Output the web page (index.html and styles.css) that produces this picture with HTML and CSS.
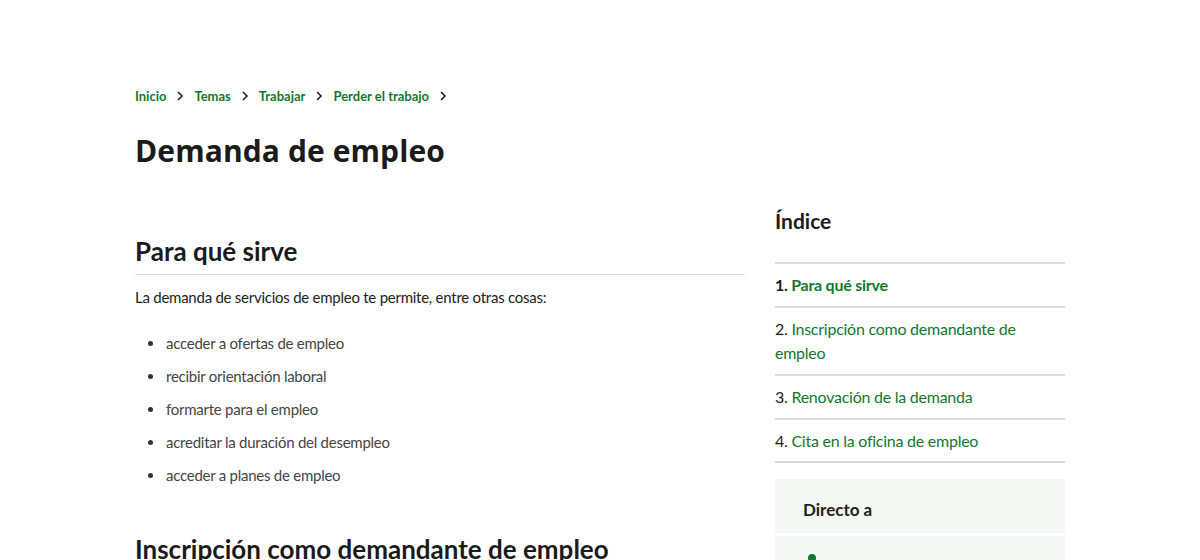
FILE: index.html
```html
<!DOCTYPE html>
<html lang="es">
<head>
<meta charset="utf-8">
<title>Demanda de empleo</title>
<link rel="stylesheet" href="styles.css">
</head>
<body>
<div class="page">
  <nav class="breadcrumb">
    <a href="#">Inicio</a>
    <svg class="chev" viewBox="0 0 8 12" width="8" height="12"><polyline points="2,2 6,6 2,10" fill="none" stroke="#222" stroke-width="1.6"/></svg>
    <a href="#">Temas</a>
    <svg class="chev" viewBox="0 0 8 12" width="8" height="12"><polyline points="2,2 6,6 2,10" fill="none" stroke="#222" stroke-width="1.6"/></svg>
    <a href="#">Trabajar</a>
    <svg class="chev" viewBox="0 0 8 12" width="8" height="12"><polyline points="2,2 6,6 2,10" fill="none" stroke="#222" stroke-width="1.6"/></svg>
    <a href="#">Perder el trabajo</a>
    <svg class="chev" viewBox="0 0 8 12" width="8" height="12"><polyline points="2,2 6,6 2,10" fill="none" stroke="#222" stroke-width="1.6"/></svg>
  </nav>
  <h1 class="title">Demanda de empleo</h1>
  <div class="layout">
    <main class="main">
      <h2 class="section-title">Para qué sirve</h2>
      <p class="text">La demanda de servicios de empleo te permite, entre otras cosas:</p>
      <ul class="list">
        <li>acceder a ofertas de empleo</li>
        <li>recibir orientación laboral</li>
        <li>formarte para el empleo</li>
        <li>acreditar la duración del desempleo</li>
        <li>acceder a planes de empleo</li>
      </ul>
      <h2 class="section-title next">Inscripción como demandante de empleo</h2>
    </main>
    <aside class="aside">
      <h2 class="toc-title">Índice</h2>
      <ol class="toc">
        <li class="active">1. <a href="#">Para qué sirve</a></li>
        <li>2. <a href="#">Inscripción como demandante de empleo</a></li>
        <li>3. <a href="#">Renovación de la demanda</a></li>
        <li>4. <a href="#">Cita en la oficina de empleo</a></li>
      </ol>
      <div class="direct">
        <div class="direct-head">Directo a</div>
        <div class="direct-body"><span class="dot"></span></div>
      </div>
    </aside>
  </div>
</div>
</body>
</html>
```

FILE: styles.css
```css
* { box-sizing: border-box; }
html, body { margin: 0; padding: 0; background: #fff; }
body {
  font-family: "Source Sans Pro", "Lato", "Liberation Sans", sans-serif;
  color: #222;
  height: 560px;
  overflow: hidden;
}
a { color: #12782f; text-decoration: none; }

.page {
  width: 930px;
  margin: 0 auto;
  padding-top: 86px;
}

.breadcrumb {
  display: flex;
  align-items: center;
  gap: 9px;
  height: 20px;
  font-size: 13px;
  font-weight: 700;
}
.breadcrumb a { color: #12782f; }
.chev { display: block; margin: 0 1px; }

.title {
  margin: 25px 0 0;
  font-family: "Open Sans", "Noto Sans", sans-serif;
  font-weight: 700;
  font-size: 30px;
  line-height: 40px;
  color: #1b1b1b;
  letter-spacing: 0.1px;
}

.layout {
  display: flex;
  gap: 30px;
  margin-top: 36px;
}
.main { width: 610px; }
.aside { width: 290px; }

.section-title {
  margin: 28px 0 0;
  font-size: 26px;
  line-height: 32px;
  font-weight: 700;
  color: #1b1b1b;
  padding-bottom: 7px;
  border-bottom: 1px solid #dcdcdc;
}
.section-title.next {
  margin-top: 46px;
  border-bottom: none;
}
.text {
  margin: 10px 0 0;
  font-size: 15px;
  letter-spacing: -0.25px;
  line-height: 24px;
  color: #222;
}
.list {
  margin: 22px 0 0;
  padding-left: 30px;
  font-size: 15px;
  letter-spacing: -0.25px;
  line-height: 24px;
  color: #444;
}
.list li { margin-bottom: 9px; padding-left: 1px; }
.list li:last-child { margin-bottom: 0; }
.list li::marker { color: #333; }

.toc-title {
  margin: 0 0 27px;
  font-size: 21px;
  line-height: 28px;
  font-weight: 700;
  color: #1b1b1b;
}
.toc {
  list-style: none;
  margin: 0;
  padding: 0;
  border-top: 2px solid #d9d9d9;
}
.toc li {
  padding: 9px 0;
  font-size: 16px;
  letter-spacing: -0.25px;
  line-height: 24px;
  color: #222;
  border-bottom: 2px solid #d9d9d9;
}
.toc li:last-child { padding-bottom: 8px; }
.toc li.active { font-weight: 700; }
.toc a { color: #12782f; }

.direct { margin-top: 16px; }
.direct-head {
  background: #f3f8f4;
  padding: 20px 28px 12px;
  font-size: 17px;
  line-height: 22px;
  font-weight: 700;
  color: #222;
}
.direct-body {
  margin-top: 3px;
  background: #f3f8f4;
  height: 60px;
  padding: 18px 0 0 33px;
}
.dot {
  display: block;
  width: 8px;
  height: 8px;
  border-radius: 50%;
  background: #12782f;
}
```
